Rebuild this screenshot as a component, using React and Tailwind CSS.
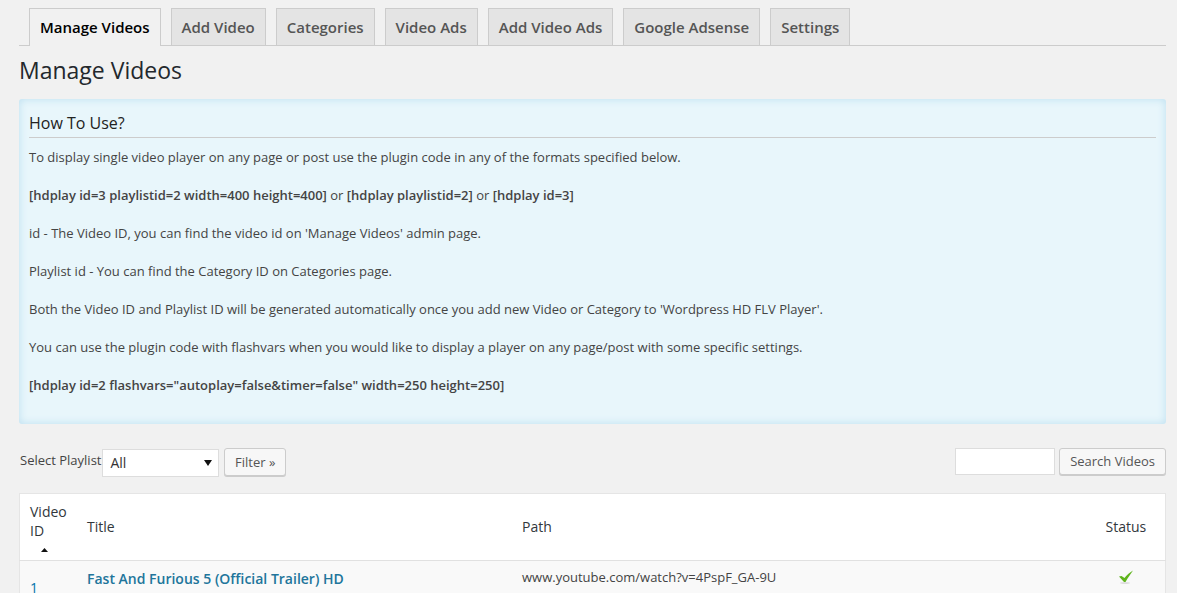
const tabs = ['Add Video', 'Categories', 'Video Ads', 'Add Video Ads', 'Google Adsense', 'Settings'];

function Para({ children, last }) {
  return <p className={last ? 'leading-[19px]' : 'leading-[19px] mb-[19px]'}>{children}</p>;
}

function CheckMark() {
  return (
    <svg width="16" height="14" viewBox="0 0 16 14" className="mx-auto">
      <path d="M1 6.5 L3.5 6 L6.5 8 C8.5 5.5 11.5 2.5 15 0.5 C12.5 4 10 7.5 7.5 12 L6 12 Z" fill="#5fb41c" />
      <ellipse cx="7" cy="13" rx="5" ry="0.8" fill="#d4d4d4" />
    </svg>
  );
}

export default function App() {
  return (
    <div className="h-[593px] overflow-hidden bg-[#f1f1f1] font-['Open_Sans',sans-serif] text-[13px] text-[#444] pl-[19px] pr-[11px]">
      {/* Tabs */}
      <div className="flex gap-[10px] pt-[8px] pl-[10px] border-b border-[#ccc] h-[46px]">
        <a className="h-[38px] px-[10px] flex items-center border border-b-0 border-[#ccc] bg-[#f1f1f1] text-[15px] font-semibold text-black">
          Manage Videos
        </a>
        {tabs.map(t => (
          <a key={t} className="h-[37px] px-[10px] flex items-center border border-b-0 border-[#ccc] bg-[#e4e4e4] text-[15px] font-semibold text-[#555]">
            {t}
          </a>
        ))}
      </div>

      <h2 className="text-[23px] leading-[29px] text-[#23282d] mt-[10px] mb-[14px]">Manage Videos</h2>

      {/* How to use */}
      <div className="h-[325px] rounded-[3px] bg-[#e8f6fb] p-[10px] shadow-[inset_0_0_8px_#bcdff0]">
        <h3 className="text-[16px] leading-[28px] text-[#222] border-b border-[#ccc] h-[29px] mb-[10px]">How To Use?</h3>
        <Para>To display single video player on any page or post use the plugin code in any of the formats specified below.</Para>
        <Para><b className="font-semibold">[hdplay id=3 playlistid=2 width=400 height=400]</b> or <b className="font-semibold">[hdplay playlistid=2]</b> or <b className="font-semibold">[hdplay id=3]</b></Para>
        <Para>id - The Video ID, you can find the video id on 'Manage Videos' admin page.</Para>
        <Para>Playlist id - You can find the Category ID on Categories page.</Para>
        <Para>Both the Video ID and Playlist ID will be generated automatically once you add new Video or Category to 'Wordpress HD FLV Player'.</Para>
        <Para>You can use the plugin code with flashvars when you would like to display a player on any page/post with some specific settings.</Para>
        <Para last><b className="font-semibold">[hdplay id=2 flashvars="autoplay=false&amp;timer=false" width=250 height=250]</b></Para>
      </div>

      {/* Filter and search */}
      <div className="flex items-center justify-between mt-[23px] h-[29px]">
        <div className="flex items-center pl-px">
          <span className="-mt-[2px]">Select Playlist</span>
          <div className="w-[117px] h-[28px] ml-px mt-[2px] bg-white border border-[#ddd] flex items-center justify-between pl-[7px] pr-[6px] text-[14px] text-[#333]">
            All
            <svg width="8" height="6" viewBox="0 0 8 6"><path d="M0 0H8L4 6Z" fill="#111" /></svg>
          </div>
          <button className="h-[28px] ml-[5px] mt-[1px] pt-[2px] px-[9.5px] rounded-[3px] border border-[#ccc] bg-[#f7f7f7] text-[13px] text-[#555] shadow-[0_1px_0_#ccc]">
            Filter »
          </button>
        </div>
        <div className="flex items-center">
          <div className="w-[100px] h-[27px] bg-white border border-[#ddd]" />
          <button className="h-[27px] ml-[4px] -mt-px pt-[2px] px-[10px] rounded-[3px] border border-[#ccc] bg-[#f7f7f7] text-[13px] text-[#555] shadow-[0_1px_0_#ccc]">
            Search Videos
          </button>
        </div>
      </div>

      {/* Videos table */}
      <table className="w-full mt-[17px] table-fixed border border-[#e5e5e5] bg-white text-left">
        <thead>
          <tr className="h-[67px] border-b border-[#e1e1e1] text-[14px] text-[#32373c]">
            <th className="w-[67.5px] pl-[10px] pr-[20px] pt-[8px] font-normal leading-[19px] align-top">
              Video ID
              <div className="pl-[11px] pt-[8px]">
                <svg width="7" height="4" viewBox="0 0 7 4" className="block"><path d="M0 4L3.5 0L7 4Z" fill="#111" /></svg>
              </div>
            </th>
            <th className="w-[435px] pb-[2px] font-normal">Title</th>
            <th className="pb-[2px] font-normal">Path</th>
            <th className="w-[60px] pb-[2px] pr-[19px] font-normal">Status</th>
          </tr>
        </thead>
        <tbody>
          <tr className="h-[100px] bg-[#f9f9f9]">
            <td className="pl-[10px] pt-[16px] text-[14px] text-[#0073aa] align-top">1</td>
            <td className="pt-[7px] align-top"><a className="text-[14px] font-semibold text-[#21759b]">Fast And Furious 5 (Official Trailer) HD</a></td>
            <td className="pt-[7px] align-top">www.youtube.com/watch?v=4PspF_GA-9U</td>
            <td className="pt-[9px] pr-[19px] align-top"><CheckMark /></td>
          </tr>
        </tbody>
      </table>
    </div>
  );
}
